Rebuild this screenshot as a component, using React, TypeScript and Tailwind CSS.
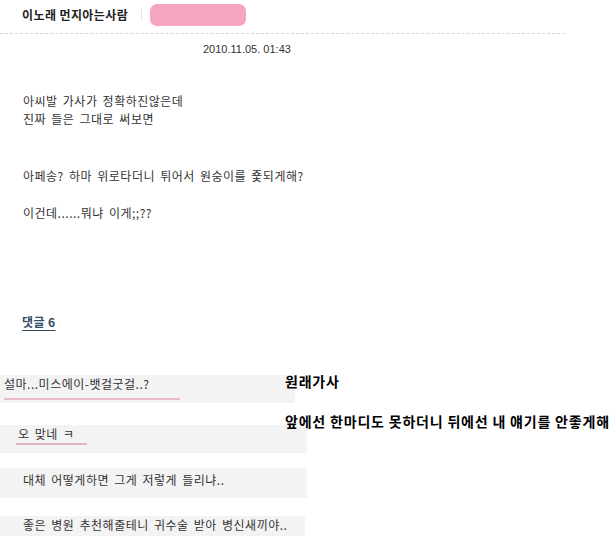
import React from "react";

const kr = { fontFamily: '"Noto Sans CJK KR", "Noto Sans", sans-serif' };

const bodyLines: { text: string; mt: string }[] = [
  { text: "아씨발 가사가 정확하진않은데", mt: "mt-[36px]" },
  { text: "진짜 들은 그대로 써보면", mt: "mt-0" },
  { text: "아페송? 하마 위로타더니 튀어서 원숭이를 죷되게해?", mt: "mt-[39px]" },
  { text: "이건데......뭐냐 이게;;??", mt: "mt-[19px]" },
];

export default function App() {
  return (
    <div className="w-[615px] h-[541px] bg-white overflow-hidden text-[#333]" style={kr}>
      {/* post header */}
      <div className="w-[565px]">
        <div className="flex items-center h-[28px] pt-[1px] text-[12px] leading-[14px]">
          <span className="ml-[22px] font-bold text-[#222] tracking-[0.4px]">이노래 먼지아는사람</span>
          <span className="ml-[13px] w-px h-[12px] bg-[#e2e2e2]" />
          <span className="ml-[8px] w-[96px] h-[22px] rounded-[7px] bg-[#f6a5bf] blur-[0.6px]" />
        </div>
        <div className="mt-[5px] border-t border-dashed border-[#d6d6d6]" />
        <div
          className="mt-[9px] pl-[203px] text-[11px] leading-[13px] text-[#333]"
          style={{ fontFamily: '"Liberation Sans", Arial, sans-serif' }}
        >
          2010.11.05. 01:43
        </div>
      </div>

      {/* post body */}
      <div className="pl-[23px] text-[12px] leading-[18px] tracking-[0.5px] [word-spacing:2px]">
        {bodyLines.map((l, i) => (
          <p key={i} className={l.mt}>
            {l.text}
          </p>
        ))}
      </div>

      <div className="mt-[91px] pl-[22px] text-[12px] leading-[18px]">
        <span className="font-bold text-[#2f4a63] tracking-[0.4px] underline underline-offset-[3px]">
          댓글 6
        </span>
      </div>

      {/* comments */}
      <div className="flex mt-[44px]">
        <div className="w-[285px] shrink-0 text-[12px] leading-[18px] text-[#333] tracking-[0.5px] [word-spacing:2px]">
          <div className="w-[295px] h-[28px] bg-[#f3f3f3]">
            <p className="pl-[4px]">설마...미스에이-뱃걸굿걸..?</p>
            <div className="ml-[4px] mt-[5px] w-[176px] h-[2px] bg-[#e9b9cb]" />
          </div>
          <div className="mt-[22px] w-[307px] h-[28px] bg-[#f3f3f3]">
            <p className="pl-[18px]">오 맞네 ㅋ</p>
            <div className="ml-[16px] w-[71px] h-[2px] bg-[#e3b4c6]" />
          </div>
          <div className="mt-[15px] w-[307px] h-[30px] pt-[3px] bg-[#f3f3f3]">
            <p className="pl-[23px]">대체 어떻게하면 그게 저렇게 들리냐..</p>
          </div>
          <div className="mt-[18px] w-[305px] h-[20px] bg-[#f3f3f3]">
            <p className="pl-[23px]">좋은 병원 추천해줄테니 귀수술 받아 병신새끼야..</p>
          </div>
        </div>
        <div className="relative whitespace-nowrap text-[14px] leading-[18px] font-bold text-black tracking-[0.8px]">
          <p className="-mt-[3px]">원래가사</p>
          <p className="mt-[22px]">앞에선 한마디도 못하더니 뒤에선 내 얘기를 안좋게해</p>
        </div>
      </div>
    </div>
  );
}
